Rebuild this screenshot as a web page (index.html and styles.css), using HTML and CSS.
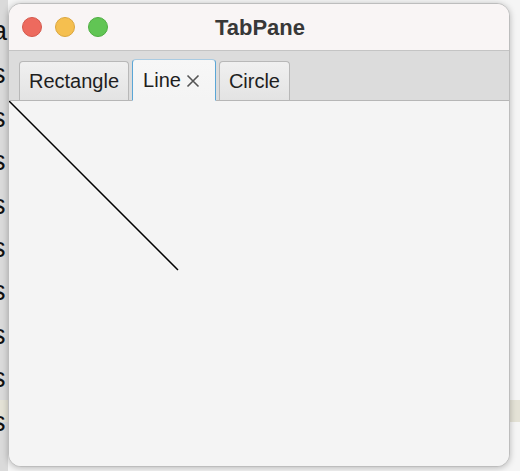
FILE: index.html
```html
<!DOCTYPE html>
<html>
<head>
<meta charset="utf-8">
<link rel="stylesheet" href="styles.css">
</head>
<body>
<div class="desktop">
  <div class="band"></div>
  <div class="behind-text">a<br>s<br>s<br>s<br>s<br>s<br>s<br>s<br>s<br>s</div>
  <div class="window">
    <div class="titlebar">
      <div class="lights">
        <span class="light red"></span>
        <span class="light yellow"></span>
        <span class="light green"></span>
      </div>
      <div class="title">TabPane</div>
      <div></div>
    </div>
    <div class="tabheader">
      <div class="tab">Rectangle</div>
      <div class="tab selected">Line
        <svg class="close" width="14" height="14" viewBox="0 0 14 14"><path d="M1.5 1.5 L12.5 12.5 M12.5 1.5 L1.5 12.5" stroke="#555" stroke-width="1.6" fill="none"/></svg>
      </div>
      <div class="tab">Circle</div>
    </div>
    <div class="content">
      <svg class="drawing" width="200" height="200" viewBox="0 0 200 200"><line x1="0" y1="0" x2="169" y2="169" stroke="#000" stroke-width="1.5"/></svg>
    </div>
  </div>
</div>
</body>
</html>
```
FILE: styles.css
```css
html, body {
  margin: 0;
  padding: 0;
}
body {
  width: 520px;
  height: 471px;
  overflow: hidden;
  background: #f4f4f4;
  font-family: "Liberation Sans", Arial, sans-serif;
}
.desktop {
  position: relative;
  width: 520px;
  height: 471px;
  background: linear-gradient(to right, #dadada 0, #dadada 8px, #f5f5f5 8px);
}
.band {
  position: absolute;
  left: 0;
  top: 400px;
  width: 520px;
  height: 22px;
  background: #e4e2d6;
}
.behind-text {
  position: absolute;
  left: -8px;
  top: 10px;
  font-size: 27px;
  line-height: 43.4px;
  color: #111;
}
.window {
  position: absolute;
  left: 8px;
  top: 3px;
  width: 502px;
  height: 464px;
  box-sizing: border-box;
  border: 1px solid #bdbdbd;
  border-radius: 13px;
  overflow: hidden;
  display: flex;
  flex-direction: column;
  background: #f4f4f4;
  box-shadow: 0 1px 6px rgba(0, 0, 0, 0.25);
}
.titlebar {
  height: 46px;
  flex: none;
  display: grid;
  grid-template-columns: 1fr auto 1fr;
  align-items: center;
  background: #f9f5f5;
  border-bottom: 1px solid #c4c4c4;
}
.lights {
  display: flex;
  gap: 13px;
  padding-left: 13px;
}
.light {
  width: 20px;
  height: 20px;
  border-radius: 50%;
  box-sizing: border-box;
}
.red { background: #ed6a5e; border: 1px solid #d5584c; }
.yellow { background: #f5bf4f; border: 1px solid #dba63e; }
.green { background: #61c554; border: 1px solid #4fae42; }
.title {
  font-weight: bold;
  font-size: 22px;
  color: #383838;
  padding-top: 1px;
  padding-left: 2px;
}
.tabheader {
  height: 50px;
  flex: none;
  box-sizing: border-box;
  background: #dcdcdc;
  border-bottom: 1px solid #b6b6b6;
  display: flex;
  align-items: flex-end;
  gap: 3px;
  padding-left: 10px;
}
.tab {
  height: 40px;
  box-sizing: border-box;
  margin-bottom: -1px;
  padding: 0 9px;
  border: 1px solid #b8b8b8;
  border-bottom: 1px solid #b6b6b6;
  border-radius: 4px 4px 0 0;
  background: linear-gradient(#f0f0f0, #e3e3e3);
  display: flex;
  align-items: center;
  gap: 5px;
  font-size: 20px;
  color: #1e1e1e;
}
.tab.selected {
  height: 42px;
  padding: 0 15px 0 10px;
  border-color: #a9cbe2 #5aa6d6 #f4f4f4 #5aa6d6;
  background: linear-gradient(#f7f7f7, #f4f4f4);
}
.close {
  display: block;
  margin-top: 1px;
}
.content {
  flex: 1;
  background: #f4f4f4;
}
.drawing {
  display: block;
}
```
